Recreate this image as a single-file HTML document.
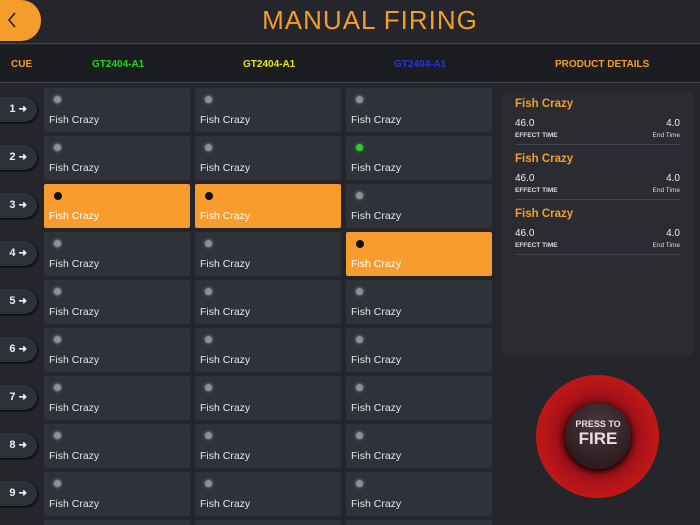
<html><head><style>
*{margin:0;padding:0;box-sizing:border-box}
html,body{width:700px;height:525px;overflow:hidden}
body{background:#25262c;font-family:"Liberation Sans",sans-serif;position:relative}
.hdr{position:absolute;left:0;top:0;width:700px;height:44px;background:#25262b;border-bottom:1px solid #45464d}
.back{position:absolute;left:-10px;top:0;width:51px;height:41px;background:#f59d2a;border-radius:0 20px 20px 0}
.title{position:absolute;left:0;width:740px;top:5px;text-align:center;color:#f59d2a;font-size:26px;letter-spacing:1px}
.sub{position:absolute;left:0;top:45px;width:700px;height:38px;background:#1c1d21;border-bottom:1px solid #45464d;font-size:10px;font-weight:bold}
.sub span{position:absolute;top:14px}
#g{position:absolute;left:0;top:0;width:700px;height:525px;overflow:hidden}
.cell{position:absolute;width:146px;height:44px;background:#30323a;border-radius:2px}
.cell .d{position:absolute;left:10px;top:8px;width:7px;height:7px;border-radius:50%;background:#8f9095;box-shadow:0 0 3px #aaa}
.cell .t{position:absolute;left:5px;top:26px;font-size:10.5px;color:#e6e6e6}
.cell.on{background:#f79c2d}
.cell.on .d{background:#111;box-shadow:none;width:8px;height:8px}
.cell.on .t{color:#fff}
.cue{position:absolute;left:-10px;width:47px;height:25px;background:#2f3138;border-radius:0 13px 13px 0;box-shadow:1px 1px 2px #000;color:#eee;font-size:11px;font-weight:bold;text-align:right;padding:6px 10px 0 0}
.cue i{font-style:normal;font-size:10px}
.panel{position:absolute;left:502px;top:92px;width:191px;height:263px;background:#2b2c32;border-radius:4px}
.it{position:absolute;left:13px;width:165px;border-bottom:1px solid #43444b;height:53px}
.it .n{color:#f59d2a;font-size:11.5px;font-weight:bold;position:absolute;top:6px}
.it .v{color:#eee;font-size:10px;position:absolute;top:26px}
.it .l{color:#ddd;font-size:6.5px;font-weight:bold;position:absolute;top:40px}
.r{right:0}
</style></head><body>
<div class="hdr"><div class="back"><svg style="position:absolute;left:17px;top:12px" width="10" height="16"><path d="M8 1L2 8L8 15" stroke="#222" stroke-width="1.6" fill="none"/></svg></div><div class="title">MANUAL FIRING</div></div>
<div class="sub"><span style="left:11px;color:#f59d2a">CUE</span><span style="left:92px;color:#1ed81e">GT2404-A1</span><span style="left:243px;color:#e6e21a">GT2404-A1</span><span style="left:394px;color:#2733e0">GT2404-A1</span><span style="left:555px;color:#f59d2a">PRODUCT DETAILS</span></div>
<div id="g"></div>
<div class="panel">
<div class="it" style="top:0"><div class="n">Fish Crazy</div><div class="v">46.0</div><div class="v r">4.0</div><div class="l">EFFECT TIME</div><div class="l r" style="font-weight:normal">End Time</div></div>
<div class="it" style="top:55px"><div class="n">Fish Crazy</div><div class="v">46.0</div><div class="v r">4.0</div><div class="l">EFFECT TIME</div><div class="l r" style="font-weight:normal">End Time</div></div>
<div class="it" style="top:110px"><div class="n">Fish Crazy</div><div class="v">46.0</div><div class="v r">4.0</div><div class="l">EFFECT TIME</div><div class="l r" style="font-weight:normal">End Time</div></div>
</div>
<div style="position:absolute;left:536px;top:375px;width:123px;height:123px;border-radius:50%;background:radial-gradient(circle,#5a0a0e 30%,#a8121a 50%,#cc1a14 80%,#d42a10 100%)"></div>
<div style="position:absolute;left:565px;top:403px;width:66px;height:66px;border-radius:50%;background:radial-gradient(circle at 50% 35%,#4a3a40,#2e1c20 70%);box-shadow:0 2px 6px #000;text-align:center;color:#f0dede;font-weight:bold">
<div style="font-size:9px;margin-top:16px">PRESS TO</div><div style="font-size:17px">FIRE</div></div>
<script>
var h='';for(var i=0;i<10;i++){var y=88+48*i;h+='<div class="cue" style="top:'+(y+9)+'px">'+(i+1)+' <i>&#10140;</i></div>';
[44,195,346].forEach(function(x,c){var on=(i==2&&c<2)||(i==3&&c==2);var dot=(i==1&&c==2)?' style="background:#3c3;box-shadow:0 0 3px #3c3"':'';
h+='<div class="cell'+(on?' on':'')+'" style="left:'+x+'px;top:'+y+'px"><div class="d"'+dot+'></div><div class="t">Fish Crazy</div></div>';});}
document.getElementById('g').innerHTML=h;
</script>
</body></html>
